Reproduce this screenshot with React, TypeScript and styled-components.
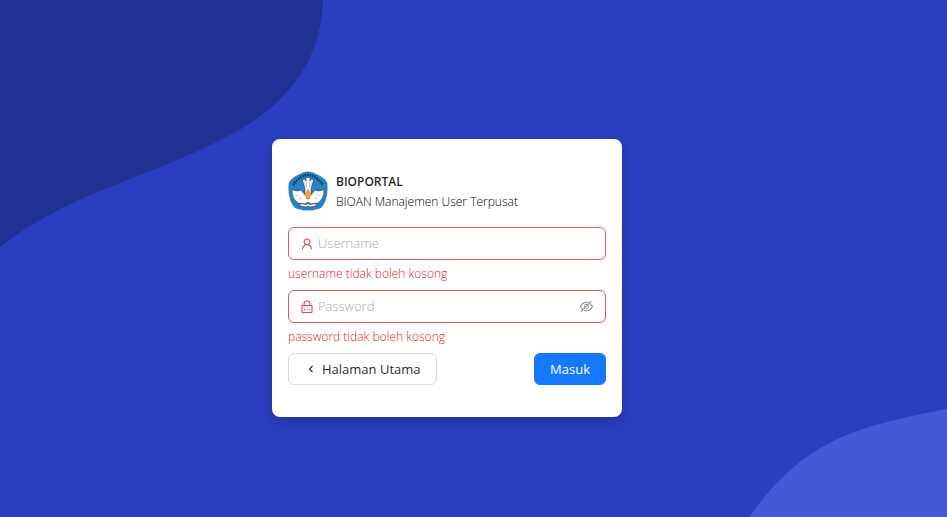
import React from 'react';
import styled, { createGlobalStyle } from 'styled-components';
import { AiOutlineEyeInvisible, AiOutlineUser } from 'react-icons/ai';

const GlobalStyle = createGlobalStyle`
  *, *::before, *::after { box-sizing: border-box; }
  body {
    margin: 0;
    background: #2a3ebf;
    color: rgba(0, 0, 0, 0.88);
    font-family: "Open Sans", "Noto Sans", sans-serif;
  }
  button, input { font-family: inherit; }
`;

const Page = styled.main`
  position: relative;
  isolation: isolate;
  display: grid;
  place-items: center;
  min-height: 100vh;
  padding: 39px 53px 0 0;
  overflow: hidden;
`;

const Backdrop = styled.svg`
  position: absolute;
  inset: 0;
  z-index: -1;
  width: 100%;
  height: 100%;
`;

const Card = styled.form`
  width: 100%;
  max-width: 350px;
  padding: 32px 16px;
  border-radius: 8px;
  background: #fff;
  box-shadow: 0 6px 16px rgba(0, 0, 0, 0.12), 0 3px 6px rgba(0, 0, 0, 0.08);
`;

const Header = styled.header`
  display: flex;
  gap: 8px;
  margin-bottom: 15px;
`;

const Heading = styled.div`
  padding-top: 1px;
  font-size: 12px;
  line-height: 20px;
`;

const Title = styled.h1`
  margin: 0;
  font-size: 12px;
  font-weight: 600;
  line-height: 20px;
`;

const Subtitle = styled.p`
  margin: 0;
  color: #000;
  font-weight: 300;
`;

const Field = styled.div`
  height: 63px;
`;

const InputBox = styled.label`
  display: flex;
  align-items: center;
  gap: 4px;
  height: 33px;
  padding: 0 11px;
  border: 1px solid #e3545c;
  border-radius: 6px;
  color: #e3404a;
`;

const TextInput = styled.input`
  flex: 1;
  min-width: 0;
  padding: 0 0 1px;
  border: 0;
  outline: 0;
  background: transparent;
  color: rgba(0, 0, 0, 0.88);
  font-size: 13px;
  font-weight: 300;
  line-height: 22px;
  &::placeholder { color: #a8a8a8; opacity: 1; }
`;

const ErrorText = styled.p`
  margin: 0;
  padding-top: 4px;
  color: #e0202c;
  font-size: 12px;
  font-weight: 300;
  line-height: 20px;
`;

const IconButton = styled.button`
  display: flex;
  padding: 0;
  border: 0;
  background: none;
  color: #8c8c8c;
  cursor: pointer;
`;

const Actions = styled.div`
  display: flex;
  justify-content: space-between;
`;

const Button = styled.button<{ $primary?: boolean }>`
  display: flex;
  align-items: center;
  gap: 4px;
  height: 32px;
  padding: 0 15px;
  border: 1px solid ${(p) => (p.$primary ? '#1677ff' : '#d9d9d9')};
  border-radius: 6px;
  background: ${(p) => (p.$primary ? '#1677ff' : '#fff')};
  color: ${(p) => (p.$primary ? '#fff' : 'rgba(0, 0, 0, 0.88)')};
  font-size: 13px;
  line-height: 22px;
  cursor: pointer;
`;

const Emblem = () => (
  <svg width="40" height="40" viewBox="0 0 40 40" role="img" aria-label="Tut Wuri Handayani">
    <path d="M15 1.500 Q20 -.5 25 1.500 Q32 4 37.500 9 Q39.500 11 39.500 15 Q40 26 35.500 34 Q34 37 30 38 Q20 41 10 38 Q6 37 4.500 34 Q0 26 .5 15 Q.5 11 2.500 9 Q8 4 15 1.500Z" fill="#2583c3" />
    <path d="M5 14 Q20 -6 35 14" fill="none" stroke="#123c5c" strokeWidth="2.400" strokeDasharray="1.800 .7" />
    <path d="M4 18.500 Q9 21 13 19 L17 24 V18 L14.500 9 L17 8 L18 10 L18 6.500 H22 L22 10 L23 8 L25.500 9 L23 18 V24 L27 19 Q31 21 36 18.500 Q36 28 30 32 L23 33 L20 31 L17 33 L10 32 Q4 28 4 18.500Z" fill="#fff" stroke="#252b2e" strokeWidth=".5" />
    <path d="M18.500 9 V17 M21.500 9 V17 M16.500 10 L17.500 16 M23.500 10 L22.500 16 M7 24 L11 25 M10 28 L14 27 M33 24 L29 25 M30 28 L26 27" fill="none" stroke="#7b878d" strokeWidth=".4" />
    <path d="M20 18 L21.500 21 L24 23.500 L22 25.500 L21.500 28 H18.500 L18 25.500 L16 23.500 L18.500 21Z" fill="#f1a334" stroke="#68451c" strokeWidth=".3" />
    <path d="M12 32.500 L18 33.500 L20 32.500 L22 33.500 L28 32.500 V35 L22 36 L20 35 L18 36 L12 35Z" fill="#fff" stroke="#202b32" strokeWidth=".6" />
  </svg>
);

const LockIcon = () => (
  <svg width="14" height="14" viewBox="0 0 14 14" fill="none" stroke="currentColor" strokeWidth="1.100" aria-hidden="true">
    <rect x="2" y="5.500" width="10" height="7" rx=".5" />
    <path d="M4 5.500 V4 A3 3 0 0 1 10 4 V5.500" />
    <path d="M4 9.500 H5 M6.500 9.500 H7.500 M9 9.500 H10" />
  </svg>
);

const ChevronIcon = () => (
  <svg width="14" height="14" viewBox="0 0 14 14" fill="none" stroke="currentColor" strokeWidth="1.100" aria-hidden="true">
    <path d="M8.500 4 L5.500 7 L8.500 10" />
  </svg>
);

export default function App() {
  const [visible, setVisible] = React.useState(false);
  return (
    <>
      <GlobalStyle />
      <Page>
        <Backdrop viewBox="0 0 947 517" preserveAspectRatio="none" aria-hidden="true">
          <path d="M0 0 H323 C321 58 292 98 241 129 C164 174 73 189 0 247Z" fill="#213093" />
          <path d="M749 517 C805 439 855 427 947 409 V517Z" fill="#4459d6" />
        </Backdrop>
        <Card noValidate onSubmit={(e) => e.preventDefault()}>
          <Header>
            <Emblem />
            <Heading>
              <Title>BIOPORTAL</Title>
              <Subtitle>BIOAN Manajemen User Terpusat</Subtitle>
            </Heading>
          </Header>
          <Field>
            <InputBox>
              <AiOutlineUser size={14} aria-hidden="true" />
              <TextInput placeholder="Username" aria-label="Username" aria-invalid="true" aria-describedby="username-error" />
            </InputBox>
            <ErrorText id="username-error">username tidak boleh kosong</ErrorText>
          </Field>
          <Field>
            <InputBox>
              <LockIcon />
              <TextInput type={visible ? 'text' : 'password'} placeholder="Password" aria-label="Password" aria-invalid="true" aria-describedby="password-error" />
              <IconButton type="button" aria-label="Toggle password visibility" onClick={() => setVisible(!visible)}>
                <AiOutlineEyeInvisible size={15} />
              </IconButton>
            </InputBox>
            <ErrorText id="password-error">password tidak boleh kosong</ErrorText>
          </Field>
          <Actions>
            <Button type="button"><ChevronIcon />Halaman Utama</Button>
            <Button type="submit" $primary>Masuk</Button>
          </Actions>
        </Card>
      </Page>
    </>
  );
}
